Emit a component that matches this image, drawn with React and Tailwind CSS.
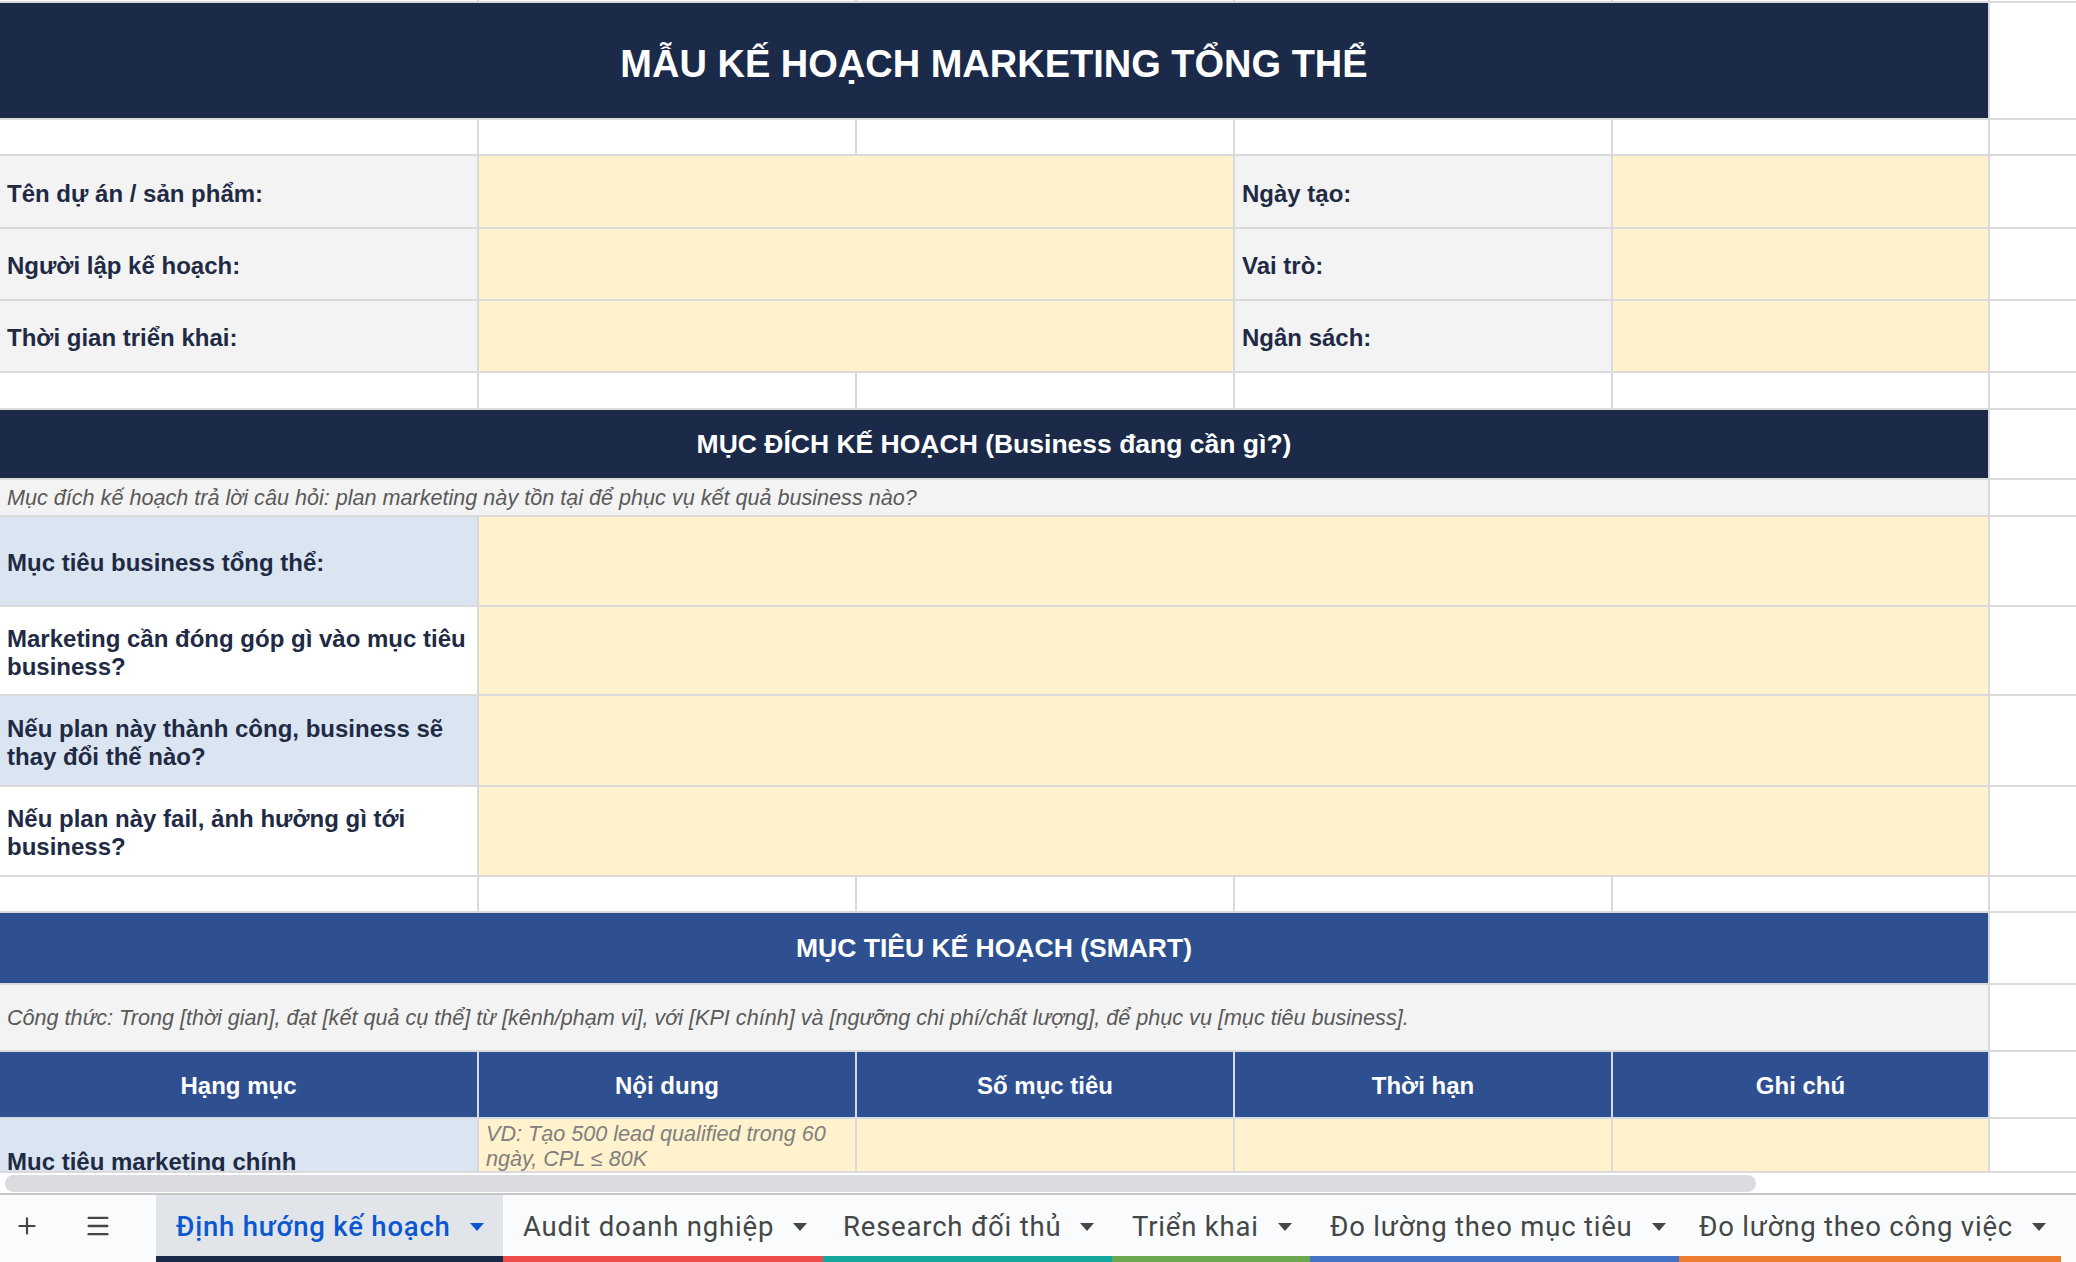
import { Plus, Menu } from 'lucide-react'

const GRID = 'grid grid-cols-[479px_378px_378px_378px_377px_1fr]'

function Cell({ span = '', bg = 'bg-white', className = '', children }) {
  return (
    <div className={`${span} ${bg} border-r-2 border-b-2 border-[#dadada] min-w-0 ${className}`}>
      {children}
    </div>
  )
}

// trailing column F (outside the print area)
function Tail() {
  return <div className="bg-white border-b-2 border-[#dadada]" />
}

function EmptyRow({ h }) {
  return (
    <div className={`${GRID} ${h}`}>
      <Cell />
      <Cell />
      <Cell />
      <Cell />
      <Cell />
      <Tail />
    </div>
  )
}

const label = 'flex items-center px-[7px] pt-[4px] text-[24px] leading-[28px] font-bold text-[#1f2a44]'
const note = 'flex items-center px-[7px] pt-[2px] text-[21.6px] italic text-[#595959]'
const thead = 'flex items-center justify-center pt-[2px] text-[24px] font-bold text-white'
const band = 'flex items-center justify-center pt-[2px] text-[26.5px] font-bold text-white'

function InfoRow({ h, left, right }) {
  return (
    <div className={`${GRID} ${h}`}>
      <Cell bg="bg-[#f3f3f3]" className={label}>{left}</Cell>
      <Cell span="col-span-2" bg="bg-[#fff2cc]" />
      <Cell bg="bg-[#f3f3f3]" className={label}>{right}</Cell>
      <Cell bg="bg-[#fff2cc]" />
      <Tail />
    </div>
  )
}

function PurposeRow({ h, tint, children }) {
  return (
    <div className={`${GRID} ${h}`}>
      <Cell bg={tint ? 'bg-[#dae5f1]' : 'bg-white'} className={label}>
        <span>{children}</span>
      </Cell>
      <Cell span="col-span-4" bg="bg-[#fff2cc]" />
      <Tail />
    </div>
  )
}

const tabs = [
  { name: 'Định hướng kế hoạch', w: 'w-[347px]', bar: 'bg-[#1c2a4a]', active: true },
  { name: 'Audit doanh nghiệp', w: 'w-[320px]', bar: 'bg-[#ee4b4b]' },
  { name: 'Research đối thủ', w: 'w-[289px]', bar: 'bg-[#14a79d]' },
  { name: 'Triển khai', w: 'w-[198px]', bar: 'bg-[#6aa84f]' },
  { name: 'Đo lường theo mục tiêu', w: 'w-[369px]', bar: 'bg-[#4472c4]' },
  { name: 'Đo lường theo công việc', w: 'w-[382px]', bar: 'bg-[#ed7d31]' },
]

function Caret({ active }) {
  return (
    <svg width="14" height="8" viewBox="0 0 14 8" className="shrink-0">
      <polygon points="0,0 14,0 7,8" fill={active ? '#0b57d0' : '#444746'} />
    </svg>
  )
}

export default function App() {
  return (
    <div className="h-[1262px] w-full flex flex-col overflow-hidden bg-white font-['Liberation_Sans',Arial,sans-serif]">
      {/* Sheet grid */}
      <div className="h-[1171px] overflow-hidden shrink-0">
        <EmptyRow h="h-[3px]" />

        <div className={`${GRID} h-[117px]`}>
          <Cell span="col-span-5" bg="bg-[#1c2a4a]" className="flex items-center justify-center pt-[7px] text-[38px] font-bold text-white">
            MẪU KẾ HOẠCH MARKETING TỔNG THỂ
          </Cell>
          <Tail />
        </div>

        <EmptyRow h="h-[36px]" />
        <InfoRow h="h-[73px]" left="Tên dự án / sản phẩm:" right="Ngày tạo:" />
        <InfoRow h="h-[72px]" left="Người lập kế hoạch:" right="Vai trò:" />
        <InfoRow h="h-[72px]" left="Thời gian triển khai:" right="Ngân sách:" />
        <EmptyRow h="h-[37px]" />

        <div className={`${GRID} h-[70px]`}>
          <Cell span="col-span-5" bg="bg-[#1c2a4a]" className={band}>
            MỤC ĐÍCH KẾ HOẠCH (Business đang cần gì?)
          </Cell>
          <Tail />
        </div>

        <div className={`${GRID} h-[37px]`}>
          <Cell span="col-span-5" bg="bg-[#f3f3f3]" className={note}>
            Mục đích kế hoạch trả lời câu hỏi: plan marketing này tồn tại để phục vụ kết quả business nào?
          </Cell>
          <Tail />
        </div>

        <PurposeRow h="h-[90px]" tint>Mục tiêu business tổng thể:</PurposeRow>
        <PurposeRow h="h-[89px]">
          Marketing cần đóng góp gì vào mục tiêu<br />business?
        </PurposeRow>
        <PurposeRow h="h-[91px]" tint>
          Nếu plan này thành công, business sẽ<br />thay đổi thế nào?
        </PurposeRow>
        <PurposeRow h="h-[90px]">
          Nếu plan này fail, ảnh hưởng gì tới<br />business?
        </PurposeRow>

        <EmptyRow h="h-[36px]" />

        <div className={`${GRID} h-[72px]`}>
          <Cell span="col-span-5" bg="bg-[#2e5090]" className={band}>
            MỤC TIÊU KẾ HOẠCH (SMART)
          </Cell>
          <Tail />
        </div>

        <div className={`${GRID} h-[67px]`}>
          <Cell span="col-span-5" bg="bg-[#f3f3f3]" className={note}>
            Công thức: Trong [thời gian], đạt [kết quả cụ thể] từ [kênh/phạm vi], với [KPI chính] và [ngưỡng chi phí/chất lượng], để phục vụ [mục tiêu business].
          </Cell>
          <Tail />
        </div>

        <div className={`${GRID} h-[67px]`}>
          {['Hạng mục', 'Nội dung', 'Số mục tiêu', 'Thời hạn', 'Ghi chú'].map((t) => (
            <div key={t} className={`bg-[#2e5090] border-r-2 border-b-2 border-[#d4dae6] ${thead}`}>
              {t}
            </div>
          ))}
          <Tail />
        </div>

        <div className={`${GRID} h-[84px]`}>
          <Cell bg="bg-[#dae5f1]" className={label}>Mục tiêu marketing chính</Cell>
          <Cell bg="bg-[#fff2cc]" className="px-[7px] pt-[2px] text-[21.6px] leading-[25px] italic text-[#7f7f7f]">
            VD: Tạo 500 lead qualified trong 60 ngày, CPL ≤ 80K
          </Cell>
          <Cell bg="bg-[#fff2cc]" />
          <Cell bg="bg-[#fff2cc]" />
          <Cell bg="bg-[#fff2cc]" />
          <Tail />
        </div>
      </div>

      {/* Horizontal scrollbar */}
      <div className="h-[22px] shrink-0 border-t-2 border-[#dadada] bg-white flex items-center pl-[5px]">
        <div className="h-[17px] w-[1751px] rounded-full bg-[#dadce0]" />
      </div>

      {/* Sheet tabs */}
      <div className="flex-1 border-t-2 border-[#c7c7c7] bg-[#f9fbfd] flex font-['Roboto',sans-serif]">
        <div className="w-[156px] flex items-center pb-[6px] text-[#444746]">
          <div className="w-[54px] flex justify-center">
            <Plus size={26} strokeWidth={2} />
          </div>
          <div className="w-[88px] flex justify-center">
            <Menu size={28} strokeWidth={2} />
          </div>
        </div>
        {tabs.map((t) => (
          <div key={t.name} className={`${t.w} flex flex-col ${t.active ? 'bg-[#e1e5ea]' : ''}`}>
            <div className="flex-1 flex items-center gap-[19px] pl-[20px] pt-[2px]">
              <span className={`text-[27.5px] tracking-[0.8px] whitespace-nowrap ${t.active ? 'font-medium text-[#0b57d0]' : 'text-[#444746]'}`}>
                {t.name}
              </span>
              <Caret active={t.active} />
            </div>
            <div className={`h-[6px] ${t.bar}`} />
          </div>
        ))}
      </div>
    </div>
  )
}
